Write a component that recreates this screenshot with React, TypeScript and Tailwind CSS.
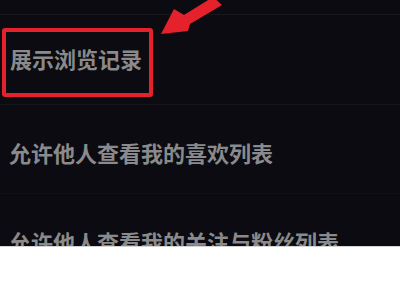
const font = { fontFamily: '"Noto Sans CJK SC", "Noto Sans", sans-serif' };

export default function App() {
  return (
    <div className="w-[400px] h-[300px] bg-white overflow-hidden" style={font}>
      <div className="relative h-[246px] overflow-hidden bg-[#0b0b11]">
        <div className="h-[15px] border-b border-[#17171e]" />

        <div className="px-[2px] pt-[13px] pb-[7px] border-b border-[#16161d]">
          <div className="h-[69px] w-[151px] rounded-[3px] border-4 border-[#e5222b] pl-[4px] pt-[15px]">
            <span className="block text-[22px] leading-[22px] font-bold text-[#8a8a8c] whitespace-nowrap">
              展示浏览记录
            </span>
          </div>
        </div>

        <div className="h-[89px] pl-[9px] pt-[36px] border-b border-[#111117]">
          <span className="block text-[22px] leading-[22px] font-bold text-[#8a8a8c] whitespace-nowrap">
            允许他人查看我的喜欢列表
          </span>
        </div>

        <div className="pl-[9px] pt-[36px]">
          <span className="block text-[22px] leading-[22px] font-bold text-[#8a8a8c] whitespace-nowrap">
            允许他人查看我的关注与粉丝列表
          </span>
        </div>

        {/* red pointer arrow */}
        <svg className="absolute left-0 top-0" width="400" height="60" viewBox="0 0 400 60">
          <polygon
            points="161,34 174,9 184,15 213,-3 222,5 190,24 188,31"
            fill="#e5222b"
          />
        </svg>
      </div>
      <div className="h-px bg-[#d4d4d4]" />
    </div>
  );
}
